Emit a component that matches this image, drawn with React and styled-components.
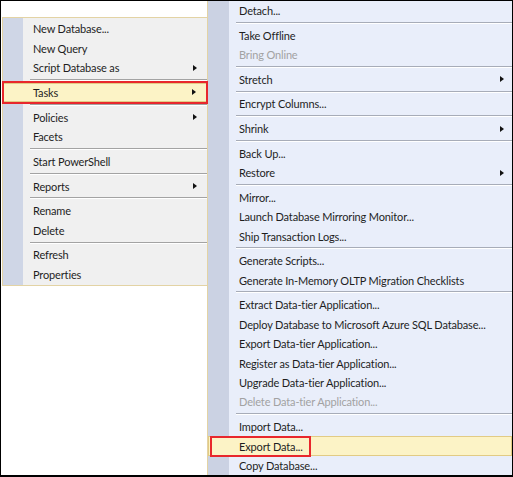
import React from 'react';
import styled, { createGlobalStyle, css } from 'styled-components';

const Global = createGlobalStyle`
  html, body { margin: 0; padding: 0; background: #ffffff; }
  body { font-family: Lato, "Segoe UI", "Noto Sans", sans-serif; }
`;

const palette = {
  left: { bg: '#f0f0f0', gutter: '#cfd6e6', gutterW: 20, pad: 30, padR: 10, sepL: 27, sepLine: '#a3a3a3' },
  right: { bg: '#e9eefa', gutter: '#cbd2e3', gutterW: 21, pad: 31, padR: 8, sepL: 28, sepLine: '#a7acb8' },
};

const Frame = styled.div`
  width: 513px;
  height: 477px;
  box-sizing: border-box;
  border: 1px solid #000;
  border-bottom-width: 2px;
  overflow: hidden;
  display: flex;
  background: #ffffff;
`;

const LeftColumn = styled.div`
  width: 206px;
  flex: none;
  box-sizing: border-box;
  padding: 16px 0 0 1px;
  position: relative;
  z-index: 2;
`;

const Menu = styled.div`
  box-sizing: border-box;
  display: flex;
  flex-direction: column;
  background: linear-gradient(
    to right,
    ${(p) => palette[p.$side].gutter} 0,
    ${(p) => palette[p.$side].gutter} ${(p) => palette[p.$side].gutterW}px,
    ${(p) => palette[p.$side].bg} ${(p) => palette[p.$side].gutterW}px
  );
  ${(p) =>
    p.$side === 'left'
      ? css`
          border: 1px solid #e3d3a4;
          border-right: none;
          padding: 1px 0 1px 0;
        `
      : css`
          flex: 1;
          min-width: 0;
          border-left: 1px solid #e3d3a4;
          padding: 0;
          min-height: 100%;
        `}
`;

const Item = styled.div`
  position: relative;
  box-sizing: border-box;
  height: 19.5px;
  display: flex;
  align-items: center;
  padding: 0 ${(p) => palette[p.$side].padR}px 0 ${(p) => palette[p.$side].pad}px;
  font-size: 11px;
  letter-spacing: -0.15px;
  color: ${(p) => (p.$disabled ? '#a2a2a2' : '#1e1e1e')};
  white-space: nowrap;
  border: 1px solid transparent;
  border-left-width: 0;
  border-right-width: 0;
  ${(p) =>
    p.$hl &&
    css`
      background: #fcf3c6;
      border: 1px solid #e2cb84;
      padding-left: ${palette[p.$side].pad - 1}px;
    `}
`;

const Label = styled.span`
  flex: 1;
  min-width: 0;
`;

const Arrow = styled.span`
  flex: none;
  width: 0;
  height: 0;
  border-left: 4px solid #111;
  border-top: 3.5px solid transparent;
  border-bottom: 3.5px solid transparent;
`;

const RedBox = styled.span`
  position: absolute;
  box-sizing: border-box;
  border: 2px solid #e8272c;
  pointer-events: none;
  ${(p) =>
    p.$mode === 'row'
      ? css`
          top: -3px;
          bottom: -3px;
          left: -2px;
          right: -2px;
        `
      : css`
          top: -1px;
          bottom: -2px;
          left: 1px;
          width: 101px;
        `}
`;

const Separator = styled.div`
  height: 5.2px;
  display: flex;
  align-items: center;
  padding-left: ${(p) => palette[p.$side].sepL}px;
  &::before {
    content: '';
    flex: 1;
    height: 0;
    border-top: 1px solid ${(p) => palette[p.$side].sepLine};
    border-bottom: 1px solid #ffffff;
  }
`;

const leftItems = [
  { t: 'New Database...' },
  { t: 'New Query' },
  { t: 'Script Database as', sub: true },
  'sep',
  { t: 'Tasks', sub: true, hl: true, box: 'row' },
  'sep',
  { t: 'Policies', sub: true },
  { t: 'Facets' },
  'sep',
  { t: 'Start PowerShell' },
  'sep',
  { t: 'Reports', sub: true },
  'sep',
  { t: 'Rename' },
  { t: 'Delete' },
  'sep',
  { t: 'Refresh' },
  { t: 'Properties' },
];

const rightItems = [
  { t: 'Detach...' },
  'sep',
  { t: 'Take Offline' },
  { t: 'Bring Online', dis: true },
  'sep',
  { t: 'Stretch', sub: true },
  'sep',
  { t: 'Encrypt Columns...' },
  'sep',
  { t: 'Shrink', sub: true },
  'sep',
  { t: 'Back Up...' },
  { t: 'Restore', sub: true },
  'sep',
  { t: 'Mirror...' },
  { t: 'Launch Database Mirroring Monitor...' },
  { t: 'Ship Transaction Logs...' },
  'sep',
  { t: 'Generate Scripts...' },
  { t: 'Generate In-Memory OLTP Migration Checklists' },
  'sep',
  { t: 'Extract Data-tier Application...' },
  { t: 'Deploy Database to Microsoft Azure SQL Database...' },
  { t: 'Export Data-tier Application...' },
  { t: 'Register as Data-tier Application...' },
  { t: 'Upgrade Data-tier Application...' },
  { t: 'Delete Data-tier Application...', dis: true },
  'sep',
  { t: 'Import Data...' },
  { t: 'Export Data...', hl: true, box: 'label' },
  { t: 'Copy Database...' },
];

function MenuList({ side, items }) {
  return (
    <Menu $side={side}>
      {items.map((it, i) =>
        it === 'sep' ? (
          <Separator key={i} $side={side} />
        ) : (
          <Item key={i} $side={side} $hl={it.hl} $disabled={it.dis}>
            <Label>{it.t}</Label>
            {it.sub && <Arrow />}
            {it.box && <RedBox $mode={it.box} />}
          </Item>
        )
      )}
    </Menu>
  );
}

export default function App() {
  return (
    <>
      <Global />
      <Frame>
        <LeftColumn>
          <MenuList side="left" items={leftItems} />
        </LeftColumn>
        <MenuList side="right" items={rightItems} />
      </Frame>
    </>
  );
}
